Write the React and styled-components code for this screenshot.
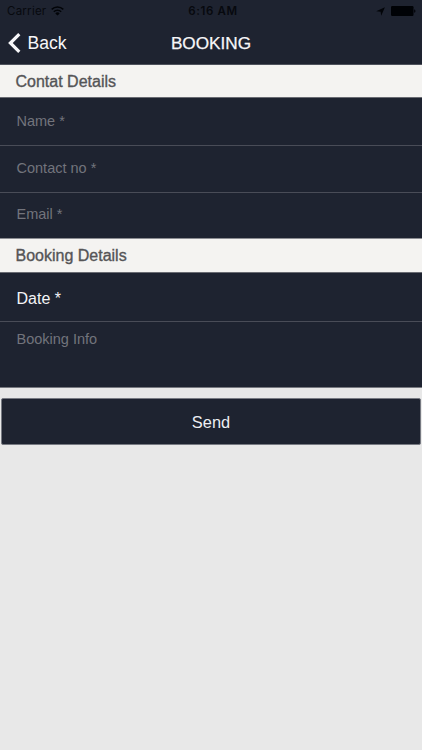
import React from "react";
import styled, { createGlobalStyle } from "styled-components";

const GlobalStyle = createGlobalStyle`
  * {
    box-sizing: border-box;
  }

  body {
    margin: 0;
    background: #e8e8e8;
    font-family: "Liberation Sans", Arial, sans-serif;
  }
`;

const Screen = styled.div`
  display: flex;
  flex-direction: column;
  min-height: 100vh;
  background: #e8e8e8;
`;

const Header = styled.header`
  height: 65px;
  background: #1e2330;
  border-bottom: 1px solid #4e525c;
`;

const StatusBar = styled.div`
  display: grid;
  grid-template-columns: 1fr auto 1fr;
  align-items: center;
  height: 22px;
  padding: 0 6px 0 7px;
  color: #07090e;
  font-family: Inter, sans-serif;
  font-size: 11.5px;
  line-height: 22px;
`;

const Carrier = styled.div`
  display: flex;
  align-items: center;
  gap: 5px;
  letter-spacing: 0.25px;
`;

const Clock = styled.div`
  padding-left: 3px;
  font-weight: 600;
  letter-spacing: 0.6px;
`;

const StatusIcons = styled.div`
  display: flex;
  align-items: center;
  justify-content: flex-end;
  gap: 6px;
`;

const NavBar = styled.nav`
  display: grid;
  grid-template-columns: 1fr auto 1fr;
  align-items: center;
  height: 42px;
  padding: 0 8px;
  color: #f7f7f9;
`;

const BackButton = styled.button`
  display: flex;
  align-items: center;
  gap: 6.5px;
  padding: 0;
  border: 0;
  background: none;
  color: inherit;
  font-family: inherit;
  font-size: 17.6px;
  line-height: 20px;
`;

const Title = styled.h1`
  margin: 0;
  font-size: 17.2px;
  font-weight: 400;
  line-height: 20px;
  -webkit-text-stroke: 0.25px currentColor;
`;

const SectionTitle = styled.h2`
  height: ${(props) => props.$height}px;
  margin: 0;
  padding-left: 15.5px;
  border-bottom: 1px solid #696b72;
  background: #f4f3f1;
  color: #555557;
  font-size: 16px;
  font-weight: 400;
  line-height: 33px;
  -webkit-text-stroke: 0.35px currentColor;
`;

const Field = styled.div`
  height: ${(props) => props.$height}px;
  padding: ${(props) => props.$top}px 16.5px 0;
  border-bottom: 1px solid ${(props) => props.$line || "#494c57"};
  background: #1e2330;
  color: ${(props) => (props.$active ? "#f3f3f6" : "#72747c")};
  font-size: ${(props) => (props.$active ? 16 : 14.5)}px;
  line-height: 18px;
`;

const SendButton = styled.button`
  height: 47px;
  margin: 10px 1px 0;
  padding: 0;
  border: 1px solid #777a82;
  border-radius: 2px;
  background: #1e2330;
  color: #edeef2;
  font-family: inherit;
  font-size: 16.4px;
  line-height: 20px;
`;

const WifiIcon = () => (
  <svg width="13" height="10" viewBox="0 0 13 10" fill="none" stroke="#020408">
    <path d="M.7 3.4a8.3 8.3 0 0 1 11.6 0M2.8 5.7a5.3 5.3 0 0 1 7.4 0" strokeWidth="1.5" />
    <path d="M6.5 9.6 4.3 7.4a3 3 0 0 1 4.4 0Z" fill="#020408" stroke="none" />
  </svg>
);

const LocationIcon = () => (
  <svg width="9" height="9" viewBox="0 0 9 9" fill="#020408">
    <path d="M8.9.2 5.2 8.8 4.6 4.8.2 4.3Z" />
  </svg>
);

const BatteryIcon = () => (
  <svg width="25" height="10" viewBox="0 0 25 10" fill="#000206">
    <rect x="0" y="0" width="22.5" height="10" rx="1.2" />
    <path d="M23.2 3.2c1.7.4 1.7 3.2 0 3.6Z" />
  </svg>
);

const BackIcon = () => (
  <svg width="13" height="20" viewBox="0 0 13 20" fill="none" stroke="currentColor">
    <path d="M11.3 1.2 2.4 10l8.9 8.8" strokeWidth="3.2" />
  </svg>
);

export default function App() {
  return (
    <Screen>
      <GlobalStyle />
      <Header>
        <StatusBar>
          <Carrier>
            Carrier
            <WifiIcon />
          </Carrier>
          <Clock>6:16 AM</Clock>
          <StatusIcons>
            <LocationIcon />
            <BatteryIcon />
          </StatusIcons>
        </StatusBar>
        <NavBar>
          <BackButton type="button">
            <BackIcon />
            Back
          </BackButton>
          <Title>BOOKING</Title>
        </NavBar>
      </Header>

      <SectionTitle $height={33}>Contat Details</SectionTitle>
      <Field $height={48} $top={14}>Name *</Field>
      <Field $height={47} $top={13}>Contact no *</Field>
      <Field $height={46} $top={12} $line="#8c8d92">Email *</Field>

      <SectionTitle $height={34}>Booking Details</SectionTitle>
      <Field $height={49} $top={17} $active>Date *</Field>
      <Field $height={66} $top={8} $line="#777980">Booking Info</Field>

      <SendButton type="button">Send</SendButton>
    </Screen>
  );
}
